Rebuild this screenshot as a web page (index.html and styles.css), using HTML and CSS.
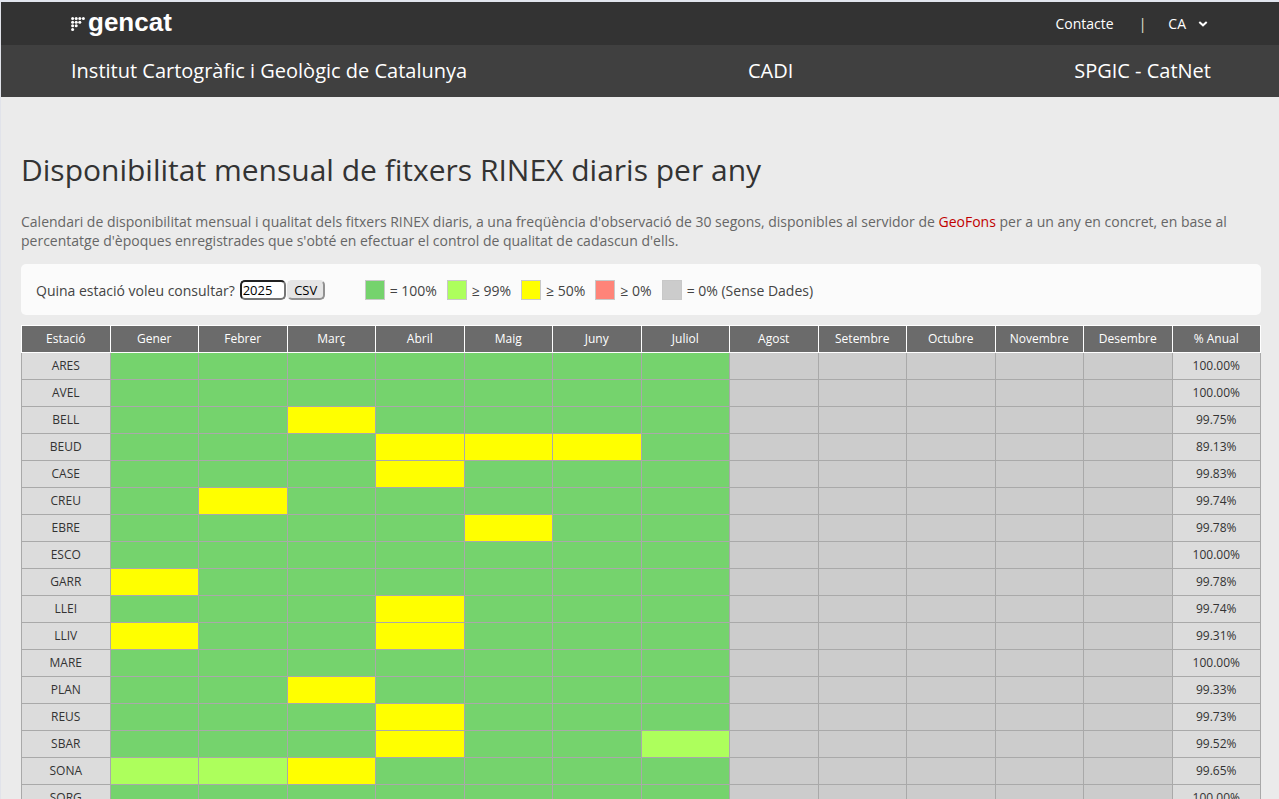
FILE: index.html
```
<!DOCTYPE html>
<html lang="ca">
<head>
<meta charset="utf-8">
<title>Disponibilitat mensual de fitxers RINEX</title>
<link rel="stylesheet" href="styles.css">
</head>
<body>
<header>
<div class="topbar">
<a class="logo" href="#"><svg class="dots" viewBox="0 0 14 14" aria-hidden="true"><g fill="#fff"><circle cx="1.6" cy="1.6" r="1.5"/><circle cx="5.2" cy="1.6" r="1.5"/><circle cx="8.8" cy="1.6" r="1.5"/><circle cx="12.4" cy="1.6" r="1.5"/><circle cx="1.6" cy="5.2" r="1.5"/><circle cx="5.2" cy="5.2" r="1.5"/><circle cx="8.8" cy="5.2" r="1.5"/><circle cx="1.6" cy="8.8" r="1.5"/><circle cx="5.2" cy="8.8" r="1.5"/><circle cx="1.6" cy="12.4" r="1.5"/></g></svg><span>gencat</span></a>
<nav class="tools"><a href="#">Contacte</a><span class="bar">|</span><button type="button" class="lang">CA<svg class="chevron" viewBox="0 0 10 6" aria-hidden="true"><path d="M1.3 1 5 4.3 8.7 1" fill="none" stroke="#fff" stroke-width="2"/></svg></button></nav>
</div>
<div class="titlebar"><a href="#">Institut Cartogràfic i Geològic de Catalunya</a><a href="#">CADI</a><a href="#">SPGIC - CatNet</a></div>
</header>
<main>
<h1>Disponibilitat mensual de fitxers RINEX diaris per any</h1>
<p class="intro">Calendari de disponibilitat mensual i qualitat dels fitxers RINEX diaris, a una freqüència d'observació de 30 segons, disponibles al servidor de <a href="#">GeoFons</a> per a un any en concret, en base al percentatge d'èpoques enregistrades que s'obté en efectuar el control de qualitat de cadascun d'ells.</p>
<form class="panel">
<div class="query"><label for="year">Quina estació voleu consultar?</label><input id="year" type="text" value="2025"><button type="button">CSV</button></div>
<ul class="legend"><li><i class="g"></i>= 100%</li><li><i class="l"></i>≥ 99%</li><li><i class="y"></i>≥ 50%</li><li><i class="r"></i>≥ 0%</li><li><i class="n"></i>= 0% (Sense Dades)</li></ul>
</form>
<table>
<thead><tr><th>Estació</th><th>Gener</th><th>Febrer</th><th>Març</th><th>Abril</th><th>Maig</th><th>Juny</th><th>Juliol</th><th>Agost</th><th>Setembre</th><th>Octubre</th><th>Novembre</th><th>Desembre</th><th>% Anual</th></tr></thead>
<tbody>
<tr><td>ARES</td><td class="g"></td><td class="g"></td><td class="g"></td><td class="g"></td><td class="g"></td><td class="g"></td><td class="g"></td><td class="n"></td><td class="n"></td><td class="n"></td><td class="n"></td><td class="n"></td><td>100.00%</td></tr>
<tr><td>AVEL</td><td class="g"></td><td class="g"></td><td class="g"></td><td class="g"></td><td class="g"></td><td class="g"></td><td class="g"></td><td class="n"></td><td class="n"></td><td class="n"></td><td class="n"></td><td class="n"></td><td>100.00%</td></tr>
<tr><td>BELL</td><td class="g"></td><td class="g"></td><td class="y"></td><td class="g"></td><td class="g"></td><td class="g"></td><td class="g"></td><td class="n"></td><td class="n"></td><td class="n"></td><td class="n"></td><td class="n"></td><td>99.75%</td></tr>
<tr><td>BEUD</td><td class="g"></td><td class="g"></td><td class="g"></td><td class="y"></td><td class="y"></td><td class="y"></td><td class="g"></td><td class="n"></td><td class="n"></td><td class="n"></td><td class="n"></td><td class="n"></td><td>89.13%</td></tr>
<tr><td>CASE</td><td class="g"></td><td class="g"></td><td class="g"></td><td class="y"></td><td class="g"></td><td class="g"></td><td class="g"></td><td class="n"></td><td class="n"></td><td class="n"></td><td class="n"></td><td class="n"></td><td>99.83%</td></tr>
<tr><td>CREU</td><td class="g"></td><td class="y"></td><td class="g"></td><td class="g"></td><td class="g"></td><td class="g"></td><td class="g"></td><td class="n"></td><td class="n"></td><td class="n"></td><td class="n"></td><td class="n"></td><td>99.74%</td></tr>
<tr><td>EBRE</td><td class="g"></td><td class="g"></td><td class="g"></td><td class="g"></td><td class="y"></td><td class="g"></td><td class="g"></td><td class="n"></td><td class="n"></td><td class="n"></td><td class="n"></td><td class="n"></td><td>99.78%</td></tr>
<tr><td>ESCO</td><td class="g"></td><td class="g"></td><td class="g"></td><td class="g"></td><td class="g"></td><td class="g"></td><td class="g"></td><td class="n"></td><td class="n"></td><td class="n"></td><td class="n"></td><td class="n"></td><td>100.00%</td></tr>
<tr><td>GARR</td><td class="y"></td><td class="g"></td><td class="g"></td><td class="g"></td><td class="g"></td><td class="g"></td><td class="g"></td><td class="n"></td><td class="n"></td><td class="n"></td><td class="n"></td><td class="n"></td><td>99.78%</td></tr>
<tr><td>LLEI</td><td class="g"></td><td class="g"></td><td class="g"></td><td class="y"></td><td class="g"></td><td class="g"></td><td class="g"></td><td class="n"></td><td class="n"></td><td class="n"></td><td class="n"></td><td class="n"></td><td>99.74%</td></tr>
<tr><td>LLIV</td><td class="y"></td><td class="g"></td><td class="g"></td><td class="y"></td><td class="g"></td><td class="g"></td><td class="g"></td><td class="n"></td><td class="n"></td><td class="n"></td><td class="n"></td><td class="n"></td><td>99.31%</td></tr>
<tr><td>MARE</td><td class="g"></td><td class="g"></td><td class="g"></td><td class="g"></td><td class="g"></td><td class="g"></td><td class="g"></td><td class="n"></td><td class="n"></td><td class="n"></td><td class="n"></td><td class="n"></td><td>100.00%</td></tr>
<tr><td>PLAN</td><td class="g"></td><td class="g"></td><td class="y"></td><td class="g"></td><td class="g"></td><td class="g"></td><td class="g"></td><td class="n"></td><td class="n"></td><td class="n"></td><td class="n"></td><td class="n"></td><td>99.33%</td></tr>
<tr><td>REUS</td><td class="g"></td><td class="g"></td><td class="g"></td><td class="y"></td><td class="g"></td><td class="g"></td><td class="g"></td><td class="n"></td><td class="n"></td><td class="n"></td><td class="n"></td><td class="n"></td><td>99.73%</td></tr>
<tr><td>SBAR</td><td class="g"></td><td class="g"></td><td class="g"></td><td class="y"></td><td class="g"></td><td class="g"></td><td class="l"></td><td class="n"></td><td class="n"></td><td class="n"></td><td class="n"></td><td class="n"></td><td>99.52%</td></tr>
<tr><td>SONA</td><td class="l"></td><td class="l"></td><td class="y"></td><td class="g"></td><td class="g"></td><td class="g"></td><td class="g"></td><td class="n"></td><td class="n"></td><td class="n"></td><td class="n"></td><td class="n"></td><td>99.65%</td></tr>
<tr><td>SORG</td><td class="g"></td><td class="g"></td><td class="g"></td><td class="g"></td><td class="g"></td><td class="g"></td><td class="g"></td><td class="n"></td><td class="n"></td><td class="n"></td><td class="n"></td><td class="n"></td><td>100.00%</td></tr>
</tbody>
</table>
</main>
</body>
</html>
```
FILE: styles.css
```
* { box-sizing: border-box; }
body {
  margin: 0;
  height: 100vh;
  overflow: hidden;
  border-top: 2px solid #e1e5ee;
  border-left: 1px solid #e1e3ea;
  background: #ebebeb;
  color: #333;
  font: 14px/19px "Open Sans", sans-serif;
}
a { text-decoration: none; }
header a { color: #fff; }
.topbar, .titlebar {
  display: flex;
  justify-content: space-between;
  align-items: center;
  padding: 0 68px 0 70px;
}
.topbar { height: 43px; background: #333; padding-right: 71px; }
.titlebar { height: 52px; background: #404040; font-size: 20px; line-height: 28px; }
.logo {
  display: flex;
  gap: 3px;
  padding-bottom: 4px;
  font: bold 26px/30px "Liberation Sans", sans-serif;
}
.dots { width: 14px; height: 14px; margin-top: 10px; }
.tools { display: flex; align-items: center; color: #fff; }
.bar { margin: 0 22px 0 25px; color: #ece2d2; }
.lang {
  display: flex;
  align-items: center;
  gap: 12px;
  padding: 0;
  border: 0;
  background: none;
  color: #fff;
  font: inherit;
}
.chevron { width: 10px; height: 6px; }
main { padding: 51px 18px 0 20px; }
h1 { margin: 0 0 21px; font-size: 30px; line-height: 43px; font-weight: 400; }
.intro { margin: 0; color: #666; }
.intro a { color: #c00000; }
.panel {
  display: flex;
  align-items: center;
  gap: 40px;
  margin: 14px 0 10px;
  padding: 16px 15px 15px;
  border-radius: 5px;
  background: #fbfbfb;
  color: #444;
}
.query { display: flex; align-items: center; }
.query input {
  width: 46px;
  height: 20px;
  margin: 0 1px 0 5px;
  padding: 1px;
  border: 2px inset #767676;
  border-radius: 5px;
  background: #fff;
  color: #000;
  font: 13px/16px "Open Sans", sans-serif;
}
.query button {
  width: 38px;
  height: 20px;
  padding: 0;
  border: 2px outset #e5e5e5;
  border-radius: 5px;
  background: #e5e5e5;
  color: #000;
  font: 13px/14px "Open Sans", sans-serif;
}
.legend { display: flex; gap: 10px; margin: 0; padding: 0; list-style: none; }
.legend li { display: flex; align-items: center; gap: 5px; }
.legend i { width: 20px; height: 20px; border: 1px solid #c8c8c8; }
table {
  width: 100%;
  border-collapse: collapse;
  table-layout: fixed;
  font-size: 12px;
  text-align: center;
}
th, td { height: 27px; padding: 0; line-height: 18px; }
th { border: 1px solid #fff; background: #6b6b6b; color: #fff; font-weight: 500; }
td { border: 1px solid #a9a9a9; background: #dcdcdc; }
.g { background: #75d36d; }
.l { background: #adff5c; }
.y { background: #ff0; }
.r { background: #ff8479; }
.n { background: #ccc; }
```
